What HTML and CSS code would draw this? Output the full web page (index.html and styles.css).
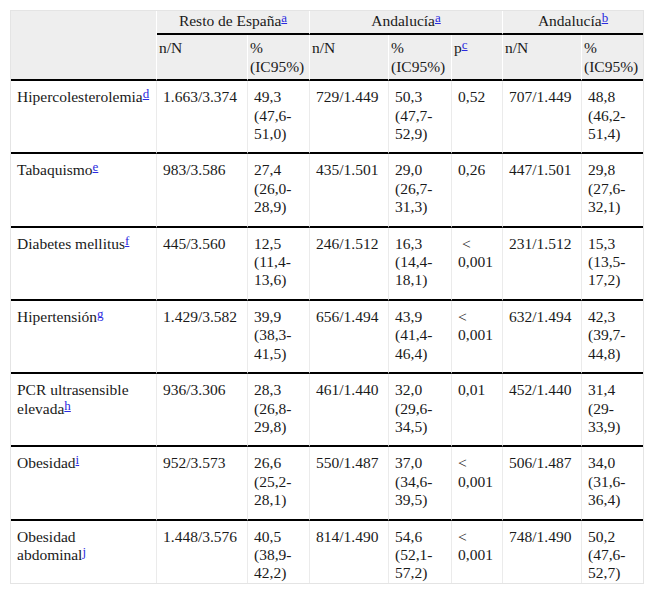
FILE: index.html
```html
<!DOCTYPE html>
<html lang="es">
<head>
<meta charset="utf-8">
<title>Tabla</title>
<link rel="stylesheet" href="styles.css">
</head>
<body>
<div class="wrap">
<table class="data">
  <colgroup>
    <col class="c1"><col class="c2"><col class="c3"><col class="c4"><col class="c5"><col class="c6"><col class="c7"><col class="c8">
  </colgroup>
  <thead>
    <tr class="h1">
      <th rowspan="2" class="corner"></th>
      <th colspan="2" class="group">Resto de España<sup><a href="#">a</a></sup></th>
      <th colspan="3" class="group">Andalucía<sup><a href="#">a</a></sup></th>
      <th colspan="2" class="group last">Andalucía<sup><a href="#">b</a></sup></th>
    </tr>
    <tr class="h2">
      <th>n/N</th>
      <th>% (IC95%)</th>
      <th>n/N</th>
      <th>% (IC95%)</th>
      <th>p<sup><a href="#">c</a></sup></th>
      <th>n/N</th>
      <th class="last">% (IC95%)</th>
    </tr>
  </thead>
  <tbody>
    <tr>
      <td>Hipercolesterolemia<sup><a href="#">d</a></sup></td>
      <td>1.663/3.374</td><td>49,3 (47,6-51,0)</td><td>729/1.449</td><td>50,3 (47,7-52,9)</td><td>0,52</td><td>707/1.449</td><td class="last">48,8 (46,2-51,4)</td>
    </tr>
    <tr>
      <td>Tabaquismo<sup><a href="#">e</a></sup></td>
      <td>983/3.586</td><td>27,4 (26,0-28,9)</td><td>435/1.501</td><td>29,0 (26,7-31,3)</td><td>0,26</td><td>447/1.501</td><td class="last">29,8 (27,6-32,1)</td>
    </tr>
    <tr>
      <td>Diabetes mellitus<sup><a href="#">f</a></sup></td>
      <td>445/3.560</td><td>12,5 (11,4-13,6)</td><td>246/1.512</td><td>16,3 (14,4-18,1)</td><td>&nbsp;&lt; 0,001</td><td>231/1.512</td><td class="last">15,3 (13,5-17,2)</td>
    </tr>
    <tr>
      <td>Hipertensión<sup><a href="#">g</a></sup></td>
      <td>1.429/3.582</td><td>39,9 (38,3-41,5)</td><td>656/1.494</td><td>43,9 (41,4-46,4)</td><td>&lt; 0,001</td><td>632/1.494</td><td class="last">42,3 (39,7-44,8)</td>
    </tr>
    <tr>
      <td>PCR ultrasensible elevada<sup><a href="#">h</a></sup></td>
      <td>936/3.306</td><td>28,3 (26,8-29,8)</td><td>461/1.440</td><td>32,0 (29,6-34,5)</td><td>0,01</td><td>452/1.440</td><td class="last">31,4 (29-33,9)</td>
    </tr>
    <tr>
      <td>Obesidad<sup><a href="#">i</a></sup></td>
      <td>952/3.573</td><td>26,6 (25,2-28,1)</td><td>550/1.487</td><td>37,0 (34,6-39,5)</td><td>&lt; 0,001</td><td>506/1.487</td><td class="last">34,0 (31,6-36,4)</td>
    </tr>
    <tr class="end">
      <td>Obesidad<br>abdominal<sup><a href="#">j</a></sup></td>
      <td>1.448/3.576</td><td>40,5 (38,9-42,2)</td><td>814/1.490</td><td>54,6 (52,1-57,2)</td><td>&lt; 0,001</td><td>748/1.490</td><td class="last">50,2 (47,6-52,7)</td>
    </tr>
  </tbody>
</table>
</div>
</body>
</html>
```
FILE: styles.css
```css
html, body {
  margin: 0;
  padding: 0;
  background: #fff;
}
.wrap {
  padding: 10px;
}
.data {
  border-collapse: separate;
  border-spacing: 0;
  table-layout: fixed;
  width: 634px;
  border: 1px solid #e4e4e4;
  font-family: "Liberation Serif", "Times New Roman", serif;
  font-size: 15.5px;
  line-height: 18.4px;
  color: #1a1a1a;
}
.c1 { width: 146px; }
.c2 { width: 91px; }
.c3 { width: 62px; }
.c4 { width: 79px; }
.c5 { width: 63px; }
.c6 { width: 51px; }
.c7 { width: 79px; }
.c8 { width: 61px; }

.data th {
  background: #eeeeee;
  font-weight: normal;
  text-align: left;
  vertical-align: top;
  border-right: 1px solid #ffffff;
  border-bottom: 2px solid #000;
  padding: 4px 2px 3px 2px;
}
.data th.last,
.data td.last {
  border-right: none;
}
.data .h1 th {
  padding: 1px 2px 3px 2px;
}
.data th.group {
  text-align: center;
}
.data td {
  vertical-align: top;
  text-align: left;
  border-right: 1px solid #ebebeb;
  border-bottom: 2px solid #000;
  padding: 7px 6px 9px 6px;
}
.data tr.end td {
  border-bottom: none;
  padding-bottom: 0;
}
.data sup {
  font-size: 13px;
  line-height: 0;
  vertical-align: 4px;
}
.data sup a {
  color: #2a2ae0;
  text-decoration: underline;
}
```
